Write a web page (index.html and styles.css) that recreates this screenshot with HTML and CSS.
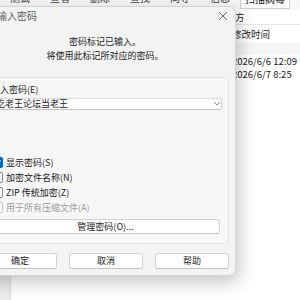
FILE: index.html
```html
<!DOCTYPE html>
<html lang="zh-CN">
<head>
    <meta charset="UTF-8">
    <meta name="viewport" content="width=device-width, initial-scale=1.0">
    <title>输入密码</title>
    <link rel="stylesheet" href="styles.css">
</head>
<body>
    <div class="app">
        <div class="toolbar">
            <span>测试</span>
            <span>查看</span>
            <span>删除</span>
            <span>查找</span>
            <span>向导</span>
            <span>信息</span>
            <span class="tab">扫描病毒</span>
            <span>注释</span>
        </div>
        <div class="main">
            <div class="side"></div>
            <div class="list">
                <div class="list-row path"><span></span><span>方</span></div>
                <div class="list-row head"><span></span><span>修改时间</span></div>
                <div class="list-gap"></div>
                <div class="list-row item"><span></span><span>2026/6/6 12:09</span></div>
                <div class="list-row item"><span></span><span>2026/6/7 8:25</span></div>
            </div>
        </div>
    </div>

    <div class="dialog">
        <div class="titlebar">
            <span class="title">输入密码</span>
            <svg class="close" width="10" height="10" viewBox="0 0 10 10">
                <path d="M1 1 L9 9 M9 1 L1 9" stroke="#6e6e6e" stroke-width="1" fill="none"/>
            </svg>
        </div>
        <div class="message">
            <div>密码标记已输入。</div>
            <div>将使用此标记所对应的密码。</div>
        </div>
        <div class="panel">
            <div class="label">输入密码(E)</div>
            <div class="combo">
                <span>吃老王论坛当老王</span>
                <svg width="6" height="4" viewBox="0 0 6 4">
                    <path d="M0.5 0.5 L3 3 L5.5 0.5" stroke="#7a7a7a" stroke-width="0.9" fill="none"/>
                </svg>
            </div>
            <div class="checks">
                <div class="check">
                    <span class="box checked">
                        <svg width="11" height="11" viewBox="0 0 11 11">
                            <path d="M2.5 5.6 L4.5 7.6 L8.5 3.2" stroke="#fff" stroke-width="1.3" fill="none"/>
                        </svg>
                    </span>
                    <span>显示密码(S)</span>
                </div>
                <div class="check">
                    <span class="box"></span>
                    <span>加密文件名称(N)</span>
                </div>
                <div class="check">
                    <span class="box"></span>
                    <span>ZIP 传统加密(Z)</span>
                </div>
                <div class="check disabled">
                    <span class="box"></span>
                    <span>用于所有压缩文件(A)</span>
                </div>
            </div>
            <button class="manage">管理密码(O)...</button>
        </div>
        <div class="actions">
            <button>确定</button>
            <button>取消</button>
            <button>帮助</button>
        </div>
    </div>
</body>
</html>
```

FILE: styles.css
```css
body {
    margin: 0;
    width: 300px;
    height: 300px;
    overflow: hidden;
    position: relative;
    background-color: #fff;
    font-family: "Noto Sans CJK SC", "Noto Sans", sans-serif;
    color: #1b1b1b;
}

.toolbar {
    display: flex;
    height: 10px;
    overflow: hidden;
    background-color: #f7f7f7;
    font-size: 10px;
    color: #333;
}

.toolbar span {
    flex: none;
    width: 40px;
    height: 17px;
    margin-top: -8px;
    line-height: 12px;
    text-align: center;
}

.toolbar .tab {
    width: 50px;
    box-sizing: border-box;
    background-color: #fff;
    border: 1px solid #cfcfcf;
    color: #111;
}

.main {
    display: flex;
    height: 290px;
}

.side {
    width: 10px;
    background-color: #ececec;
    border-right: 1px solid #dedede;
}

.list {
    flex: 1;
}

.list-row {
    display: grid;
    grid-template-columns: 221px 1fr;
    font-size: 9.5px;
    white-space: nowrap;
}

.list-row.path {
    height: 14px;
    line-height: 14px;
    border-bottom: 1px solid #e6e6e6;
}

.list-row.path span + span {
    padding-left: 3px;
}

.list-row.head {
    height: 17px;
    line-height: 18px;
}

.list-gap {
    height: 13px;
    background-color: #f6f6f6;
}

.list-row.item {
    height: 13px;
    line-height: 13px;
}

.dialog {
    position: absolute;
    left: -26px;
    top: 6px;
    width: 262px;
    height: 270px;
    box-sizing: border-box;
    display: flex;
    flex-direction: column;
    background-color: #f3f3f3;
    border: 1px solid #d4d4d4;
    border-radius: 7px;
    box-shadow: 3px 6px 18px rgba(0, 0, 0, 0.24);
    font-size: 9px;
}

.titlebar {
    display: flex;
    justify-content: space-between;
    align-items: center;
    height: 17px;
    padding: 0 7px 0 22px;
}

.title {
    font-size: 10px;
    color: #5c5c5c;
}

.message {
    margin-top: 11px;
    line-height: 14px;
    text-align: center;
}

.panel {
    margin: 14px 6px 0;
    padding: 6px 6px 9px 9px;
    background-color: #f7f7f7;
    border: 1px solid #e2e2e2;
    border-radius: 4px;
}

.label {
    line-height: 12px;
}

.combo {
    display: flex;
    justify-content: space-between;
    align-items: center;
    height: 12px;
    margin-top: 2px;
    padding: 0 1px 0 4px;
    box-sizing: border-box;
    background-color: #fff;
    border: 1px solid #dcdcdc;
    border-bottom-color: #c4c4c4;
    border-radius: 2px;
    line-height: 10px;
}

.checks {
    margin-top: 45px;
}

.check {
    display: flex;
    align-items: center;
    height: 15px;
}

.box {
    display: flex;
    width: 11px;
    height: 11px;
    box-sizing: border-box;
    margin: 0 3px 0 1px;
    background-color: #fff;
    border: 1px solid #8a8a8a;
    border-radius: 2px;
}

.box.checked {
    background-color: #0067c0;
    border-color: #0067c0;
}

.box.checked svg {
    margin: -1px;
}

.check.disabled {
    color: #9d9d9d;
}

.check.disabled .box {
    border-color: #c9c9c9;
}

button {
    font-family: inherit;
    font-size: 9px;
    color: #1b1b1b;
    background-color: #fff;
    border: 1px solid #d2d2d2;
    border-bottom-color: #c2c2c2;
    border-radius: 3px;
    padding: 0;
    box-sizing: border-box;
}

.manage {
    display: block;
    width: calc(100% - 2px);
    height: 15px;
    margin-top: 4px;
    line-height: 13px;
}

.actions {
    display: flex;
    justify-content: flex-end;
    gap: 12px;
    margin-top: 9px;
    padding-right: 6px;
}

.actions button {
    width: 74px;
    height: 16px;
    line-height: 14px;
}
```
